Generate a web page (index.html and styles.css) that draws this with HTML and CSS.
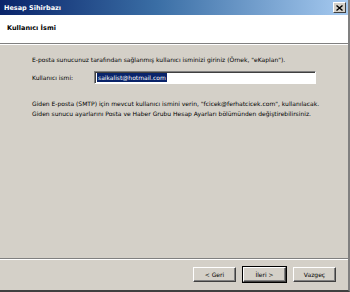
FILE: index.html
```html
<!DOCTYPE html>
<html lang="tr">
<head>
  <meta charset="UTF-8">
  <title>Hesap Sihirbazı</title>
  <link rel="stylesheet" href="styles.css">
</head>
<body>
  <div class="window">
    <div class="titlebar">
      <span class="title">Hesap Sihirbazı</span>
      <span class="close-btn">
        <svg width="7" height="6" viewBox="0 0 7 6"><path d="M0.5 0.5 L6.5 5.5 M6.5 0.5 L0.5 5.5" stroke="#000" stroke-width="1.4"/></svg>
      </span>
    </div>

    <div class="header">
      <div class="header-title">Kullanıcı İsmi</div>
    </div>

    <div class="body">
      <p class="intro">E-posta sunucunuz tarafından sağlanmış kullanıcı isminizi giriniz (Örnek, "eKaplan").</p>
      <div class="field-row">
        <span class="field-label">Kullanıcı ismi:</span>
        <div class="field-input"><span class="selected">saikalist@hotmail.com</span></div>
      </div>
      <p class="note">Giden E-posta (SMTP) için mevcut kullanıcı ismini verin, "fcicek@ferhatcicek.com", kullanılacak.<br>Giden sunucu ayarlarını Posta ve Haber Grubu Hesap Ayarları bölümünden değiştirebilirsiniz.</p>
    </div>

    <div class="footer">
      <button class="btn">&lt; Geri</button>
      <button class="btn btn-default">İleri &gt;</button>
      <button class="btn btn-cancel">Vazgeç</button>
    </div>
  </div>
</body>
</html>
```

FILE: styles.css
```css
* {
  margin: 0;
  padding: 0;
  box-sizing: border-box;
}

body {
  width: 350px;
  height: 292px;
  font-family: 'DejaVu Sans', Tahoma, sans-serif;
  font-size: 6px;
  color: #000;
  background: #d4d0c8;
}

.window {
  width: 350px;
  height: 292px;
  display: flex;
  flex-direction: column;
  border-right: 2px solid #808080;
  border-bottom: 2px solid #404040;
}

.titlebar {
  height: 15px;
  display: flex;
  align-items: center;
  justify-content: space-between;
  padding: 0 2px 0 4px;
  background: linear-gradient(90deg, #0a246a 0%, #3a6ea5 45%, #a6caf0 100%);
}

.title {
  color: #fff;
  font-weight: bold;
  font-size: 6.5px;
}

.close-btn {
  width: 13px;
  height: 11px;
  display: flex;
  align-items: center;
  justify-content: center;
  background: #d4d0c8;
  border: 1px solid;
  border-color: #fff #404040 #404040 #fff;
}

.header {
  height: 29px;
  background: #fff;
  padding: 9px 0 0 7px;
  border-bottom: 1px solid #808080;
  box-shadow: 0 1px 0 #fff;
}

.header-title {
  font-weight: bold;
  font-size: 6.5px;
}

.body {
  flex: 1;
  padding: 11px 0 0 32px;
}

.intro {
  line-height: 10px;
}

.field-row {
  display: flex;
  align-items: center;
  margin-top: 6px;
}

.field-label {
  width: 62px;
}

.field-input {
  width: 222px;
  height: 13px;
  background: #fff;
  border: 1px solid;
  border-color: #808080 #fff #fff #808080;
  box-shadow: inset 1px 1px 0 #404040;
  padding: 1px 2px;
  display: flex;
  align-items: center;
}

.selected {
  background: #0a246a;
  color: #fff;
  padding: 0 1px;
  line-height: 9px;
}

.note {
  margin-top: 15px;
  line-height: 10px;
}

.footer {
  height: 32px;
  display: flex;
  justify-content: flex-end;
  align-items: center;
  gap: 7px;
  padding: 0 12px 0 0;
  border-top: 1px solid #808080;
  box-shadow: inset 0 1px 0 #fff;
}

.btn {
  width: 43px;
  height: 15px;
  font-family: 'DejaVu Sans', Tahoma, sans-serif;
  font-size: 6px;
  color: #000;
  background: #d4d0c8;
  border: 1px solid;
  border-color: #fff #404040 #404040 #fff;
  box-shadow: inset -1px -1px 0 #808080;
}

.btn-default {
  outline: 1px solid #000;
}
```
